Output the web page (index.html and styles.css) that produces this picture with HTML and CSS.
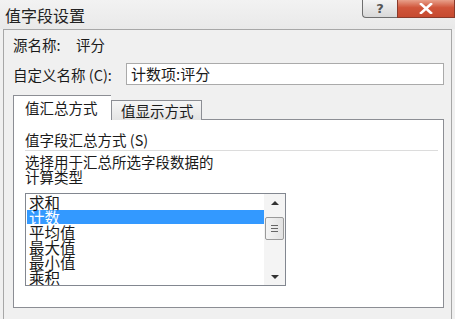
FILE: index.html
```html
<!DOCTYPE html>
<html lang="zh-CN">
<head>
    <meta charset="UTF-8">
    <title>值字段设置</title>
    <link rel="stylesheet" href="styles.css">
</head>
<body>
<div class="window">
    <div class="titlebar">
        <span class="title">值字段设置</span>
        <div class="caption-btns">
            <div class="cap-btn help">?</div>
            <div class="cap-btn close">
                <svg width="14" height="11" viewBox="0 0 14 11">
                    <path d="M2 1 L12 10 M12 1 L2 10" stroke="#fff" stroke-width="2.6" stroke-linecap="square"/>
                </svg>
            </div>
        </div>
    </div>

    <div class="client">
        <div class="row source-row">
            <span class="label">源名称:</span><span class="value">评分</span>
        </div>
        <div class="row name-row">
            <span class="label">自定义名称 (<u>C</u>):</span>
            <div class="textbox">计数项:评分</div>
        </div>

        <div class="tabs">
            <div class="tab active">值汇总方式</div>
            <div class="tab">值显示方式</div>
        </div>

        <div class="panel">
            <div class="group-title">值字段汇总方式 (<u>S</u>)</div>
            <div class="separator"></div>
            <div class="desc">选择用于汇总所选字段数据的<br>计算类型</div>

            <div class="listbox">
                <ul class="items">
                    <li>求和</li>
                    <li class="selected">计数</li>
                    <li>平均值</li>
                    <li>最大值</li>
                    <li>最小值</li>
                    <li>乘积</li>
                </ul>
                <div class="scrollbar">
                    <div class="arrow up"></div>
                    <div class="track">
                        <div class="thumb">
                            <span></span><span></span><span></span>
                        </div>
                    </div>
                    <div class="arrow down"></div>
                </div>
            </div>
        </div>
    </div>
</div>
</body>
</html>
```

FILE: styles.css
```css
* {
    box-sizing: border-box;
}

body {
    margin: 0;
    font-family: "Noto Sans CJK SC", "Noto Sans", sans-serif;
    color: #1a1a1a;
}

.window {
    width: 455px;
    height: 319px;
    background-color: #f0f0f0;
    display: flex;
    flex-direction: column;
    overflow: hidden;
}

/* Title bar */
.titlebar {
    height: 29px;
    flex-shrink: 0;
    display: flex;
    justify-content: space-between;
    align-items: flex-start;
    background: linear-gradient(#f2f2f2, #e9e9e9);
}

.title {
    font-size: 16px;
    line-height: 18px;
    padding: 6px 0 0 5px;
    color: #222;
}

.caption-btns {
    display: flex;
}

.cap-btn {
    height: 18px;
    display: flex;
    align-items: center;
    justify-content: center;
    border: 1px solid #6e6e6e;
    border-top: none;
}

.help {
    width: 35px;
    font-family: "DejaVu Sans", sans-serif;
    font-size: 13px;
    font-weight: bold;
    color: #555;
    background: linear-gradient(#f4f4f4, #d8d8d8);
    border-radius: 0 0 0 4px;
    border-right: none;
}

.close {
    width: 58px;
    background: linear-gradient(#e8a08a, #d0553a 45%, #c64a30);
    border-color: #8a3a2a;
}

/* Client area */
.client {
    flex: 1;
    margin: 0 3px;
    border: 1px solid #a7a7a7;
    border-bottom: none;
    padding: 4px 7px 0 9px;
    display: flex;
    flex-direction: column;
    font-size: 14.5px;
}

.row {
    display: flex;
    align-items: center;
    flex-shrink: 0;
}

.source-row {
    height: 20px;
}

.source-row .label {
    width: 63px;
}

.name-row {
    margin-top: 9px;
    height: 22px;
}

.name-row .label {
    width: 113px;
}

.textbox {
    flex: 1;
    height: 22px;
    line-height: 20px;
    padding-left: 4px;
    background-color: #fff;
    border: 1px solid #aaa;
    font-size: 15px;
}

u {
    text-decoration: none;
}

/* Tabs */
.tabs {
    margin-top: 10px;
    display: flex;
    align-items: flex-end;
    height: 25px;
    flex-shrink: 0;
    position: relative;
    z-index: 1;
    margin-bottom: -1px;
}

.tab {
    width: 91px;
    height: 20px;
    line-height: 19px;
    padding-left: 9px;
    border: 1px solid #8c8e94;
    border-bottom: none;
    background: linear-gradient(#f6f6f6, #e4e4e4);
    white-space: nowrap;
}

.tab.active {
    width: 98px;
    height: 25px;
    line-height: 24px;
    padding-left: 11px;
    background: #fff;
    border-right: none;
}

/* Panel */
.panel {
    height: 189px;
    flex-shrink: 0;
    background-color: #fff;
    border: 1px solid #8c8e94;
    padding: 11px 5px 0 11px;
}

.group-title {
    line-height: 18px;
}

.separator {
    height: 1px;
    background-color: #dcdcdc;
    margin: 1px 0 3px 0;
}

.desc {
    line-height: 15px;
}

/* List box */
.listbox {
    margin-top: 9px;
    width: 261px;
    height: 93px;
    border: 1px solid #828790;
    display: flex;
    overflow: hidden;
}

.items {
    list-style: none;
    margin: 0;
    padding: 1px 0 0 1px;
    flex: 1;
    font-size: 15.5px;
    line-height: 15px;
}

.items li {
    height: 15px;
    padding-left: 2px;
    white-space: nowrap;
}

.items li.selected {
    background-color: #3399ff;
    color: #fff;
    height: 14px;
    margin-bottom: 1px;
}

.scrollbar {
    width: 21px;
    display: flex;
    flex-direction: column;
    background-color: #f4f4f4;
}

.arrow {
    height: 17px;
    display: flex;
    align-items: center;
    justify-content: center;
}

.arrow::after {
    content: "";
    border-left: 4px solid transparent;
    border-right: 4px solid transparent;
}

.arrow.up::after {
    border-bottom: 4px solid #333;
}

.arrow.down::after {
    border-top: 4px solid #333;
}

.track {
    flex: 1;
}

.thumb {
    margin: 6px 1px 0 1px;
    height: 23px;
    border: 1px solid #9a9a9a;
    border-radius: 2px;
    background: linear-gradient(90deg, #f4f4f4, #e2e2e2);
    display: flex;
    flex-direction: column;
    align-items: center;
    justify-content: center;
    gap: 2px;
}

.thumb span {
    width: 7px;
    height: 1px;
    background-color: #666;
}
```
